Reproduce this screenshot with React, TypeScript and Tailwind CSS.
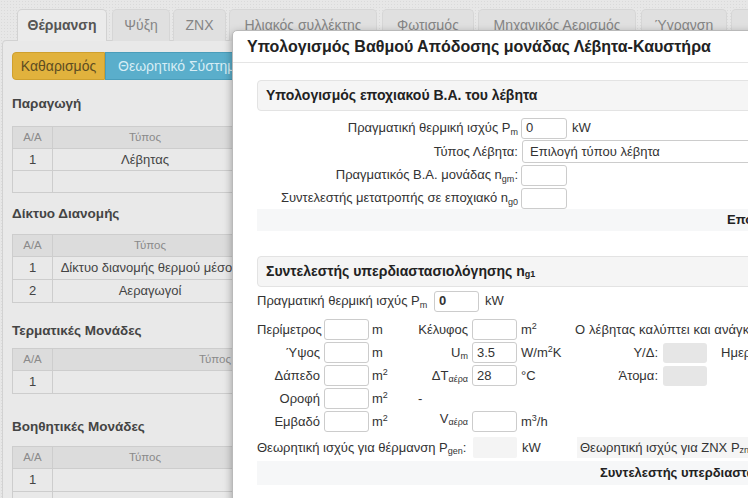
import React from "react";

const tabs: { label: string; w: number; ml: number; active?: boolean }[] = [
  { label: "Θέρμανση", w: 90, ml: 17, active: true },
  { label: "Ψύξη", w: 58, ml: 5 },
  { label: "ZNX", w: 53, ml: 3 },
  { label: "Ηλιακός συλλέκτης", w: 148, ml: 3 },
  { label: "Φωτισμός", w: 92, ml: 5 },
  { label: "Μηχανικός Αερισμός", w: 158, ml: 4 },
  { label: "Ύγρανση", w: 86, ml: 5 },
  { label: "Σκίαση", w: 80, ml: 4 },
];

type Sec = { title: string; w: number; rows: string[][]; rowH: string; mt: string; mb: string };

const sections: Sec[] = [
  { title: "Παραγωγή", w: 226, rows: [["1", "Λέβητας"], ["", ""]], rowH: "h-[22px]", mt: "mt-[14px]", mb: "mb-[12px]" },
  { title: "Δίκτυο Διανομής", w: 236, rows: [["1", "Δίκτυο διανομής θερμού μέσου"], ["2", "Αεραγωγοί"]], rowH: "h-[23px]", mt: "mt-[11px]", mb: "mb-[10px]" },
  { title: "Τερματικές Μονάδες", w: 366, rows: [["1", ""]], rowH: "h-[23px]", mt: "mt-[18px]", mb: "mb-[7px]" },
  { title: "Βοηθητικές Μονάδες", w: 226, rows: [["1", ""], ["", ""]], rowH: "h-[23px]", mt: "mt-[23px]", mb: "mb-[9px]" },
];

function Box({ v, bold, w = "w-[45px]" }: { v?: string; bold?: boolean; w?: string }) {
  return (
    <div
      className={`${w} h-[21px] shrink-0 border border-[#cccccc] rounded-[3px] bg-white px-[4px] flex items-center text-[13px] text-[#333] ${bold ? "font-bold" : ""}`}
    >
      {v}
    </div>
  );
}

function GrayBox() {
  return <div className="w-[44px] h-[20px] shrink-0 rounded-[3px] bg-[#e6e6e6]" />;
}

function Sub({ children }: { children: React.ReactNode }) {
  return <sub className="text-[9px]">{children}</sub>;
}

function Sup({ children }: { children: React.ReactNode }) {
  return <sup className="text-[9px]">{children}</sup>;
}

type GridRow = {
  l1: React.ReactNode;
  u1: React.ReactNode;
  l2: React.ReactNode;
  l2Class?: string;
  v2?: string;
  box2: boolean;
  u2: React.ReactNode;
  third?: React.ReactNode;
};

const gridRows: GridRow[] = [
  {
    l1: "Περίμετρος",
    u1: "m",
    l2: "Κέλυφος",
    box2: true,
    u2: (
      <>
        m<Sup>2</Sup>
      </>
    ),
    third: <span className="whitespace-nowrap tracking-[0.1px]">Ο λέβητας καλύπτει και ανάγκες ZNX</span>,
  },
  {
    l1: "Ύψος",
    u1: "m",
    l2: (
      <>
        U<Sub>m</Sub>
      </>
    ),
    v2: "3.5",
    box2: true,
    u2: (
      <>
        W/m<Sup>2</Sup>K
      </>
    ),
    third: (
      <div className="flex items-center">
        <div className="w-[83px] shrink-0 text-right">Υ/Δ:</div>
        <div className="ml-[5px] shrink-0">
          <GrayBox />
        </div>
        <div className="ml-[14px] shrink-0 whitespace-nowrap">Ημερήσια κατανάλωση</div>
      </div>
    ),
  },
  {
    l1: "Δάπεδο",
    u1: (
      <>
        m<Sup>2</Sup>
      </>
    ),
    l2: (
      <>
        ΔT<Sub>αέρα</Sub>
      </>
    ),
    v2: "28",
    box2: true,
    u2: "°C",
    third: (
      <div className="flex items-center">
        <div className="w-[83px] shrink-0 text-right">Άτομα:</div>
        <div className="ml-[5px] shrink-0">
          <GrayBox />
        </div>
      </div>
    ),
  },
  {
    l1: "Οροφή",
    u1: (
      <>
        m<Sup>2</Sup>
      </>
    ),
    l2: "-",
    l2Class: "w-[68px] text-left pl-[18px]",
    box2: false,
    u2: "",
  },
  {
    l1: "Εμβαδό",
    u1: (
      <>
        m<Sup>2</Sup>
      </>
    ),
    l2: (
      <span className="relative -top-[3px]">
        V<Sub>αέρα</Sub>
      </span>
    ),
    box2: true,
    u2: (
      <>
        m<Sup>3</Sup>/h
      </>
    ),
  },
];

export default function App() {
  return (
    <div className="relative w-[748px] h-[498px] overflow-hidden bg-[#e7e7e7] bg-[radial-gradient(circle,#dadada_0.8px,transparent_1px)] bg-[length:3px_3px] font-['Liberation_Sans',Arial,sans-serif] text-[#444]">
      {/* Tabs */}
      <div className="flex pt-[9px] h-[41px] relative z-10">
        {tabs.map((t) => (
          <div
            key={t.label}
            style={{ width: t.w, marginLeft: t.ml }}
            className={`shrink-0 h-[32px] rounded-t-[5px] border border-b-0 flex items-center justify-center text-[14px] whitespace-nowrap ${
              t.active
                ? "bg-[#ebebeb] border-[#d2d2d2] font-bold text-[#555]"
                : "bg-[#e0e0e0] border-[#d6d6d6] text-[#858585]"
            }`}
          >
            {t.label}
          </div>
        ))}
      </div>

      {/* Main panel */}
      <div className="-mt-px mx-[2px] h-[470px] border border-[#d2d2d2] rounded-[4px] bg-[#e9e9e9] px-[9px] pt-[11px]">
        <div className="flex h-[28px]">
          <div className="w-[93px] rounded-l-[4px] bg-[#e1b23d] border border-[#cfa02e] flex items-center justify-center text-[14px] text-[#5d4d22]">
            Καθαρισμός
          </div>
          <div className="w-[150px] bg-[#5aaecb] border border-[#4a9dba] flex items-center pl-[12px] text-[14px] text-[#d6edf5] whitespace-nowrap">
            Θεωρητικό Σύστημα
          </div>
        </div>

        {sections.map((s) => (
          <div key={s.title}>
            <div className={`${s.mt} ${s.mb} h-[20px] flex items-center text-[13.5px] font-bold text-[#444]`}>{s.title}</div>
            <div style={{ width: s.w }} className="border border-[#cdcdcd]">
              <div className="flex h-[21px] bg-[#dcdcdc] text-[11.5px] text-[#8a8a8a]">
                <div className="w-[40px] border-r border-[#cdcdcd] flex items-center justify-center">Α/Α</div>
                <div className="flex-1 flex items-center justify-center">Τύπος</div>
              </div>
              {s.rows.map((r, i) => (
                <div key={i} className={`flex ${s.rowH} border-t border-[#cdcdcd] text-[13px] text-[#444]`}>
                  <div className="w-[40px] border-r border-[#cdcdcd] flex items-center justify-center">{r[0]}</div>
                  <div className="flex-1 flex items-center justify-center whitespace-nowrap overflow-hidden">{r[1]}</div>
                </div>
              ))}
            </div>
          </div>
        ))}
      </div>

      {/* Modal */}
      <div className="absolute left-[232px] top-[30px] w-[600px] h-[500px] bg-white border border-[#b9b9b9] rounded-tl-[5px] shadow-[0_3px_9px_rgba(0,0,0,0.35)] z-20 text-[#333]">
        <div className="h-[32px] pl-[14px] flex items-center border-b border-[#e5e5e5] text-[16px] font-bold text-[#222] whitespace-nowrap">
          Υπολογισμός Βαθμού Απόδοσης μονάδας Λέβητα-Καυστήρα
        </div>

        <div className="pl-[24px] pt-[17px] text-[13px]">
          {/* Section 1 */}
          <div className="w-[560px] h-[31px] rounded-[4px] border border-[#e3e3e3] bg-[#f5f5f5] pl-[8px] flex items-center text-[14px] font-bold text-[#222] whitespace-nowrap">
            Υπολογισμός εποχιακού Β.Α. του λέβητα
          </div>
          <div className="mt-[6px] flex flex-col gap-[1px]">
            <div className="flex items-center h-[22px]">
              <div className="w-[261px] shrink-0 text-right whitespace-nowrap">
                Πραγματική θερμική ισχύς P<Sub>m</Sub>
              </div>
              <div className="ml-[3px] shrink-0">
                <Box v="0" w="w-[46px]" />
              </div>
              <div className="ml-[5px]">kW</div>
            </div>
            <div className="flex items-center h-[23px]">
              <div className="w-[261px] shrink-0 text-right whitespace-nowrap">Τύπος Λέβητα:</div>
              <div className="ml-[4px] w-[300px] shrink-0 h-[23px] border border-[#cccccc] rounded-[3px] bg-white pl-[7px] flex items-center text-[13px] whitespace-nowrap">
                Επιλογή τύπου λέβητα
              </div>
            </div>
            <div className="flex items-center h-[22px]">
              <div className="w-[261px] shrink-0 text-right whitespace-nowrap">
                Πραγματικός Β.Α. μονάδας n<Sub>gm</Sub>:
              </div>
              <div className="ml-[3px] shrink-0">
                <Box w="w-[46px]" />
              </div>
            </div>
            <div className="flex items-center h-[22px]">
              <div className="w-[261px] shrink-0 text-right whitespace-nowrap">
                Συντελεστής μετατροπής σε εποχιακό n<Sub>g0</Sub>
              </div>
              <div className="ml-[3px] shrink-0">
                <Box w="w-[46px]" />
              </div>
            </div>
          </div>
          <div className="w-[560px] h-[22px] bg-[#f6f7f8] pl-[470px] flex items-center font-bold text-[#222] whitespace-nowrap">
            Εποχιακός Β.Α. λέβητα
          </div>

          {/* Section 2 */}
          <div className="mt-[25px] w-[560px] h-[31px] rounded-[4px] border border-[#e3e3e3] bg-[#f5f5f5] pl-[8px] flex items-center text-[14px] font-bold text-[#222] whitespace-nowrap">
            Συντελεστής υπερδιαστασιολόγησης n<Sub>g1</Sub>
          </div>
          <div className="mt-[3px] flex items-center h-[22px]">
            <div className="w-[173px] shrink-0 whitespace-nowrap">
              Πραγματική θερμική ισχύς P<Sub>m</Sub>
            </div>
            <div className="ml-[4px] shrink-0">
              <Box v="0" bold />
            </div>
            <div className="ml-[6px]">kW</div>
          </div>

          <div className="mt-[7px] flex flex-col gap-[2px]">
            {gridRows.map((r, i) => (
              <div key={i} className="flex items-center h-[21px] whitespace-nowrap">
                <div className="w-[63px] shrink-0 text-right">{r.l1}</div>
                <div className="ml-[4px] shrink-0">
                  <Box />
                </div>
                <div className="w-[31px] shrink-0 pl-[3px]">{r.u1}</div>
                <div className={`shrink-0 ${r.l2Class ?? "w-[68px] text-right"}`}>{r.l2}</div>
                <div className="ml-[4px] w-[45px] shrink-0">{r.box2 ? <Box v={r.v2} /> : null}</div>
                <div className="w-[58px] shrink-0 pl-[4px]">{r.u2}</div>
                <div className="shrink-0">{r.third}</div>
              </div>
            ))}
          </div>

          <div className="mt-[5px] flex items-center h-[21px] whitespace-nowrap">
            <div className="w-[214px] shrink-0">
              Θεωρητική ισχύς για θέρμανση P<Sub>gen</Sub>:
            </div>
            <div className="ml-[2px] w-[44px] shrink-0 h-[21px] bg-[#f4f4f4] rounded-[2px]" />
            <div className="w-[60px] shrink-0 pl-[5px]">kW</div>
            <div className="h-[21px] shrink-0 bg-[#f5f5f5] pl-[3px] pr-[8px] flex items-center">
              Θεωρητική ισχύς για ZNX P<Sub>znx</Sub>:
            </div>
          </div>
          <div className="mt-[3px] w-[560px] h-[24px] bg-[#f6f7f8] pl-[343px] flex items-center font-bold text-[#222] whitespace-nowrap">
            Συντελεστής υπερδιαστασιολόγησης
          </div>
        </div>
      </div>
    </div>
  );
}
